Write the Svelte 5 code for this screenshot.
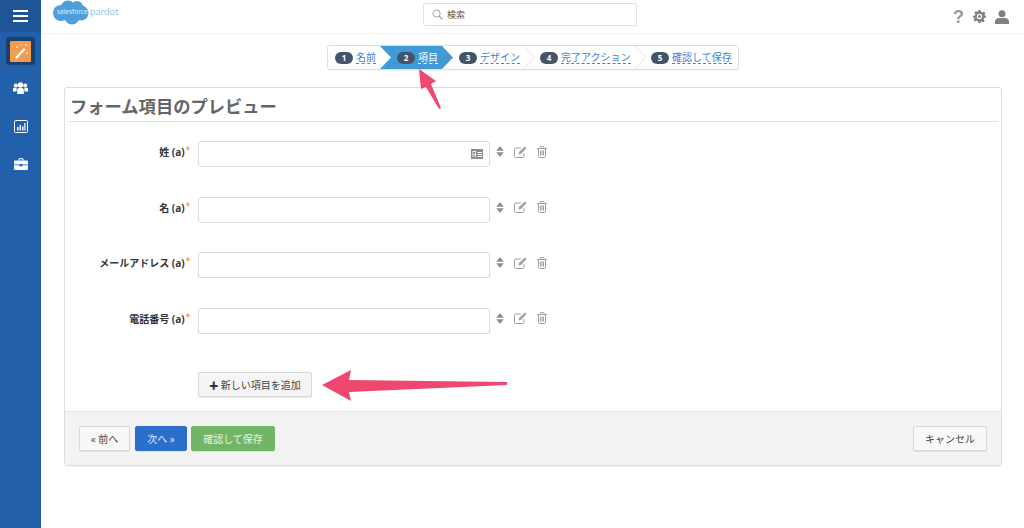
<script>
  const steps = [
    { n: 1, label: '名前' },
    { n: 2, label: '項目', active: true },
    { n: 3, label: 'デザイン' },
    { n: 4, label: '完了アクション' },
    { n: 5, label: '確認して保存' }
  ];

  const fields = [
    { label: '姓 (a)', card: true },
    { label: '名 (a)' },
    { label: 'メールアドレス (a)' },
    { label: '電話番号 (a)' }
  ];
</script>

<div class="page">
  <aside class="sidebar">
    <div class="menu-btn">
      <span></span><span></span><span></span>
    </div>
    <div class="tile">
      <div class="tile-inner">
        <svg width="16" height="16" viewBox="0 0 16 16">
          <path d="M2 14.500 11 5l1.600 1.500L3.600 16z" fill="#fff" />
          <path d="M4 3v2M3 4h2M13 1v2M12 2h2M14 9v2M13 10h2M8 1v1.500" stroke="#fff" stroke-width=".8" />
        </svg>
      </div>
    </div>
    <svg class="nav-icon people" width="15" height="13" viewBox="0 0 15 13" fill="#fff">
      <circle cx="2.800" cy="3.400" r="2" />
      <circle cx="12.200" cy="3.400" r="2" />
      <circle cx="7.500" cy="3" r="2.700" />
      <path d="M0 9V7.200C0 6.200.8 5.800 2 5.800h1.600V9.500H0zM15 9V7.200c0-1-.8-1.400-2-1.400h-1.600V9.500H15z" />
      <path d="M4.200 12V8c0-1.300.9-2 2-2h2.600c1.100 0 2 .7 2 2v4z" />
    </svg>
    <svg class="nav-icon chart" width="14" height="13" viewBox="0 0 14 13">
      <rect x=".5" y=".5" width="13" height="12" rx="1" fill="none" stroke="#fff" />
      <path d="M3 7h1.500v3.500H3zM5.500 5H7v5.500H5.500zM8 6.500h1.500v4H8zM10.300 3h1.200v7.500h-1.200z" fill="#fff" />
    </svg>
    <svg class="nav-icon case" width="14" height="12" viewBox="0 0 14 12" fill="#fff">
      <path d="M4.500 2.500V1.200C4.500.6 5 .2 5.500.2h3c.6 0 1 .4 1 1v1.300H8.500V1.300h-3v1.200z" />
      <path d="M0 3.800c0-.7.500-1.200 1.200-1.200h11.600c.7 0 1.200.5 1.200 1.200V6.500H8.500V6h-3v.5H0z" />
      <path d="M0 7.300h5.500v1h3v-1H14v3.500c0 .7-.5 1.200-1.200 1.200H1.200C.5 12 0 11.500 0 10.800z" />
    </svg>
  </aside>

  <div class="content">
    <header class="topbar">
      <div class="brand">
        <div class="cloud">
          <svg width="37" height="25" viewBox="0 0 37 25">
            <g fill="#4b9fdc">
              <circle cx="9" cy="13" r="8" />
              <circle cx="16" cy="8" r="7.500" />
              <circle cx="25" cy="7" r="6" />
              <circle cx="29" cy="13" r="7.500" />
              <circle cx="20" cy="17" r="7.500" />
            </g>
          </svg>
          <span class="cloud-text">salesforce</span>
        </div>
        <span class="pardot">pardot</span>
      </div>
      <div class="search">
        <svg width="11" height="11" viewBox="0 0 11 11" fill="none" stroke="#a8a8a8" stroke-width="1.100">
          <circle cx="4.500" cy="4.500" r="3.500" />
          <path d="m7 7 3.500 3.500" />
        </svg>
        <span>検索</span>
      </div>
      <div class="top-icons">
        <span class="help">?</span>
        <svg width="13" height="13" viewBox="0 0 24 24" fill="#808080">
          <path fill-rule="evenodd" d="M10 0h4l.8 3.400 2.400 1 3-1.800 2.800 2.800-1.800 3 1 2.400L24 11v3l-3.400.8-1 2.400 1.800 3-2.800 2.800-3-1.800-2.400 1L14 24h-4l-.8-3.400-2.400-1-3 1.800L1 18.600l1.800-3-1-2.400L0 14v-3l3.400-.8 1-2.400-1.800-3L5.400 2l3 1.800 1-.4zM12 7a5 5 0 1 0 0 10 5 5 0 0 0 0-10z" />
          <circle cx="12" cy="12" r="2.600" />
        </svg>
        <svg width="14" height="14" viewBox="0 0 14 14" fill="#808080">
          <circle cx="7" cy="3.800" r="3.500" />
          <path d="M0 14v-2.500C0 9.500 2 8 4 8h6c2 0 4 1.500 4 3.500V14z" />
        </svg>
      </div>
    </header>

    <main class="main">
      <nav class="wizard">
        {#each steps as step, i}
          <div class="step" class:active={step.active}>
            <span class="num">{step.n}</span>
            <span class="step-label">{step.label}</span>
            {#if i > 1 && i < 4}
              <svg class="chev" width="11" height="23" viewBox="0 0 11 23">
                <path d="M0 0l10.500 11.500L0 23" fill="none" stroke="#e6e6e6" />
              </svg>
            {/if}
          </div>
        {/each}
      </nav>

      <section class="card">
        <div class="card-body">
          <h1>フォーム項目のプレビュー</h1>
          <div class="fields">
            {#each fields as field}
              <div class="field">
                <div class="field-label">{field.label}<i>*</i></div>
                <div class="input">
                  {#if field.card}
                    <svg width="12" height="10" viewBox="0 0 12 10">
                      <path fill-rule="evenodd" fill="#8c8c8c" d="M0 0h12v10H0zM1.500 2v6h3.500V2zm5 1v1H11V3zm0 2v1H11V5zm0 2v1H11V7z" />
                      <circle cx="3.200" cy="4" r="1.200" fill="#8c8c8c" />
                      <path d="M1.800 7.500c0-1 .6-1.800 1.400-1.800s1.400.8 1.400 1.800z" fill="#8c8c8c" />
                    </svg>
                  {/if}
                </div>
                <div class="row-tools">
                  <svg width="8" height="11" viewBox="0 0 9 13" fill="#8f8f8f">
                    <path d="M4.500 0 9 5.500H0zM0 7.500h9L4.500 13z" />
                  </svg>
                  <svg width="13" height="12" viewBox="0 0 13 12" fill="none" stroke="#a0a0a0">
                    <path d="M10 7v3a1.500 1.500 0 0 1-1.500 1.500h-7A1 1 0 0 1 .5 10.500v-7A1.500 1.500 0 0 1 2 2h5" />
                    <path d="M4.500 8.500 5 6l6-5.500 1.500 1.500L7 8z" fill="#a0a0a0" stroke="none" />
                  </svg>
                  <svg width="10" height="12" viewBox="0 0 10 12" fill="none" stroke="#a0a0a0">
                    <path d="M1.500 3v7.500a1 1 0 0 0 1 1h5a1 1 0 0 0 1-1V3M0 2.500h10M3 2.500V1.200c0-.4.300-.7.700-.7h2.600c.4 0 .7.300.7.700v1.300M3.500 4.500v5M5 4.500v5M6.500 4.500v5" />
                  </svg>
                </div>
              </div>
            {/each}
          </div>
          <button class="btn add"><b>✚</b> 新しい項目を追加</button>
        </div>
        <footer class="card-foot">
          <button class="btn">« 前へ</button>
          <button class="btn primary">次へ »</button>
          <button class="btn success">確認して保存</button>
          <button class="btn cancel">キャンセル</button>
        </footer>
      </section>
    </main>
  </div>

  <svg class="marks" width="1024" height="528" viewBox="0 0 1024 528">
    <path fill="#ee4870" d="M419 69 436 81 431 84 441 108 439 109 426 87 421 89z" />
    <path fill="#ee4870" d="M322 385 351 370 349 380 507 382 507 385 349 392 351 401z" />
  </svg>
</div>

<style>
  :global(body) {
    margin: 0;
    background: #fff;
  }

  .page {
    position: relative;
    display: flex;
    width: 1024px;
    height: 528px;
    overflow: hidden;
    font-family: "Open Sans", "Noto Sans CJK JP", sans-serif;
    color: #444;
  }

  .sidebar {
    width: 41px;
    flex-shrink: 0;
    background: #2360ac;
    display: flex;
    flex-direction: column;
    align-items: center;
  }

  .menu-btn {
    width: 100%;
    height: 32px;
    background: #1f5496;
    display: flex;
    flex-direction: column;
    justify-content: center;
    align-items: center;
    gap: 3px;
  }

  .menu-btn span {
    width: 15px;
    height: 2px;
    background: #fff;
  }

  .tile {
    margin-top: 5px;
    width: 29px;
    height: 28px;
    border-radius: 3px;
    background: #1a3f70;
    display: flex;
    align-items: center;
    justify-content: center;
  }

  .tile-inner {
    width: 21px;
    height: 21px;
    background: #f39c4d;
    border-radius: 1px;
    display: flex;
    align-items: center;
    justify-content: center;
  }

  .nav-icon {
    display: block;
  }

  .people {
    margin-top: 17px;
  }

  .chart {
    margin-top: 25px;
  }

  .case {
    margin-top: 25px;
  }

  .content {
    flex: 1;
    min-width: 0;
    display: flex;
    flex-direction: column;
  }

  .topbar {
    height: 34px;
    box-sizing: border-box;
    border-bottom: 1px solid #f0f0f0;
    display: flex;
    align-items: center;
    position: relative;
  }

  .brand {
    display: flex;
    align-items: center;
    margin: -8px 0 0 11px;
    gap: 1px;
  }

  .cloud {
    position: relative;
    width: 37px;
    height: 25px;
  }

  .cloud svg {
    display: block;
  }

  .cloud-text {
    position: absolute;
    left: 5px;
    top: 8px;
    font-size: 6.500px;
    line-height: 8px;
    color: #e8f3fb;
  }

  .pardot {
    font-family: Lato, sans-serif;
    font-size: 10px;
    line-height: 12px;
    color: #9cc8ec;
    margin-top: -3px;
  }

  .search {
    position: absolute;
    left: 382px;
    top: 3px;
    width: 214px;
    height: 23px;
    box-sizing: border-box;
    border: 1px solid #e2e2e2;
    border-radius: 2px;
    display: flex;
    align-items: center;
    gap: 4px;
    padding-left: 8px;
    font-size: 9px;
    color: #555;
  }

  .top-icons {
    margin-left: auto;
    margin-right: 15px;
    display: flex;
    align-items: center;
    gap: 9px;
  }

  .help {
    font-size: 18px;
    line-height: 20px;
    font-weight: 700;
    color: #999;
    font-family: "Liberation Sans", sans-serif;
  }

  .main {
    flex: 1;
    padding: 11px 22px 0 23px;
  }

  .wizard {
    width: 412px;
    height: 25px;
    margin: 0 auto 0 263px;
    box-sizing: border-box;
    border: 1px solid #ddd;
    border-radius: 3px;
    display: flex;
    align-items: center;
    font-size: 10px;
    box-shadow: 0 1px 1px rgba(0, 0, 0, .04);
  }

  .step {
    position: relative;
    display: flex;
    align-items: center;
    gap: 3px;
    height: 23px;
    box-sizing: border-box;
    flex-shrink: 0;
  }

  .step:nth-child(1) { width: 52px; padding-left: 7px; }
  .step:nth-child(2) { width: 73px; padding-left: 17px; }
  .step:nth-child(3) { width: 82px; padding-left: 6px; }
  .step:nth-child(4) { width: 111px; padding-left: 5px; }
  .step:nth-child(5) { padding-left: 5px; }

  .step.active {
    background: #3f9ad6;
    clip-path: polygon(0 0, 62px 0, 73px 50%, 62px 100%, 0 100%, 11px 50%);
  }

  .num {
    width: 18px;
    height: 12px;
    border-radius: 6px;
    background: #44546a;
    color: #fff;
    font-size: 8px;
    font-weight: 700;
    line-height: 12px;
    text-align: center;
    flex-shrink: 0;
  }

  .step-label {
    color: #3d84d6;
    border-bottom: 1px dashed #3d84d6;
    line-height: 12px;
    white-space: nowrap;
  }

  .active .step-label {
    color: #fff;
    border-bottom-color: #fff;
  }

  .chev {
    position: absolute;
    right: 0;
    top: 0;
  }

  .card {
    margin-top: 17px;
    width: 938px;
    height: 379px;
    box-sizing: border-box;
    border: 1px solid #ddd;
    border-radius: 3px;
    display: flex;
    flex-direction: column;
    box-shadow: 0 1px 1px rgba(0, 0, 0, .05);
  }

  .card-body {
    flex: 1;
    padding: 0 3px 0 4px;
    position: relative;
  }

  h1 {
    margin: 0;
    height: 34px;
    box-sizing: border-box;
    border-bottom: 1px solid #e2e2e2;
    font-size: 17.300px;
    line-height: 37px;
    font-weight: 700;
    color: #666;
    padding-left: 1px;
  }

  .fields {
    padding-top: 19px;
    display: flex;
    flex-direction: column;
    gap: 29.500px;
  }

  .field {
    display: flex;
    align-items: center;
    height: 26px;
  }

  .field-label {
    width: 121px;
    text-align: right;
    font-size: 10px;
    font-weight: 700;
    color: #333;
    white-space: nowrap;
    margin-top: -5px;
  }

  .field-label i {
    color: #f39c4d;
    font-style: normal;
    font-size: 8px;
    position: relative;
    top: -3px;
    margin-left: 1px;
  }

  .input {
    margin-left: 8px;
    width: 292px;
    height: 26px;
    box-sizing: border-box;
    border: 1px solid #dcdcdc;
    border-radius: 3px;
    display: flex;
    align-items: center;
    justify-content: flex-end;
    padding-right: 6px;
  }

  .row-tools {
    display: flex;
    align-items: center;
    gap: 10px;
    margin: -5px 0 0 6px;
  }

  .btn {
    height: 25px;
    box-sizing: border-box;
    border: 1px solid #d8d8d8;
    border-radius: 2px;
    background: #f5f5f5;
    font: inherit;
    font-size: 10px;
    color: #444;
    padding: 0;
    box-shadow: 0 1px 1px rgba(0, 0, 0, .08);
  }

  .add {
    position: absolute;
    left: 133px;
    top: 284px;
    width: 114px;
  }

  .add b {
    font-size: 9px;
    color: #333;
  }

  .card-foot {
    height: 54px;
    box-sizing: border-box;
    background: #f3f3f3;
    border-top: 1px solid #e6e6e6;
    display: flex;
    align-items: flex-start;
    gap: 5px;
    padding: 14px 14px 0;
  }

  .card-foot .btn {
    width: 52px;
    background: #f8f8f8;
  }

  .card-foot .btn:first-child {
    width: 51px;
  }

  .card-foot .primary {
    background: #2a6fc9;
    border-color: #2a6fc9;
    color: #e4eefa;
  }

  .card-foot .success {
    width: 84px;
    margin-left: -1px;
    background: #73b566;
    border-color: #73b566;
    color: #e8f4e5;
  }

  .card-foot .cancel {
    width: 74px;
    margin-left: auto;
  }

  .marks {
    position: absolute;
    left: 0;
    top: 0;
    pointer-events: none;
  }
</style>
